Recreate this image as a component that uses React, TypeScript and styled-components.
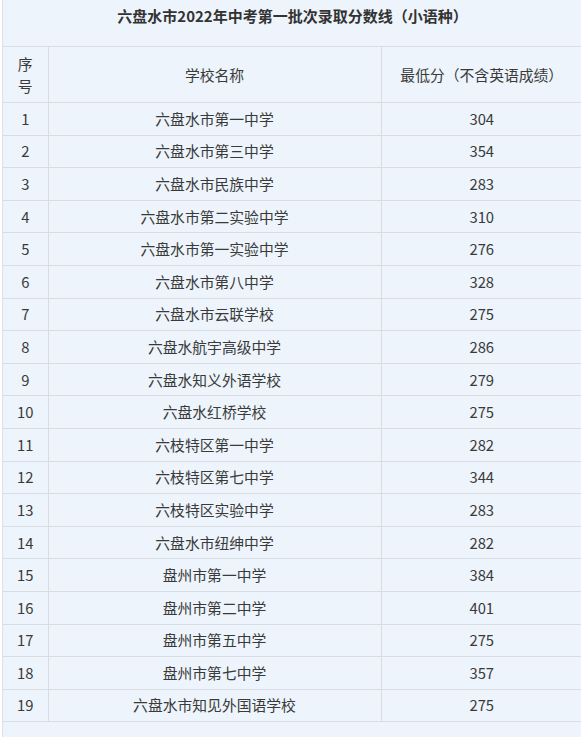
import React from "react";
import styled, { createGlobalStyle } from "styled-components";

type Row = {
  school: string;
  score: number;
};

const rows: Row[] = [
  { school: "六盘水市第一中学", score: 304 },
  { school: "六盘水市第三中学", score: 354 },
  { school: "六盘水市民族中学", score: 283 },
  { school: "六盘水市第二实验中学", score: 310 },
  { school: "六盘水市第一实验中学", score: 276 },
  { school: "六盘水市第八中学", score: 328 },
  { school: "六盘水市云联学校", score: 275 },
  { school: "六盘水航宇高级中学", score: 286 },
  { school: "六盘水知义外语学校", score: 279 },
  { school: "六盘水红桥学校", score: 275 },
  { school: "六枝特区第一中学", score: 282 },
  { school: "六枝特区第七中学", score: 344 },
  { school: "六枝特区实验中学", score: 283 },
  { school: "六盘水市纽绅中学", score: 282 },
  { school: "盘州市第一中学", score: 384 },
  { school: "盘州市第二中学", score: 401 },
  { school: "盘州市第五中学", score: 275 },
  { school: "盘州市第七中学", score: 357 },
  { school: "六盘水市知见外国语学校", score: 275 },
];

const App: React.FC = () => {
  return (
    <>
      <GlobalStyle />
      <Sheet>
        <Title>六盘水市2022年中考第一批次录取分数线（小语种）</Title>
        <Table>
          <colgroup>
            <col style={{ width: 45 }} />
            <col style={{ width: 333 }} />
            <col />
          </colgroup>
          <thead>
            <HeadRow>
              <HeadCell>
                序<br />号
              </HeadCell>
              <HeadCell>学校名称</HeadCell>
              <HeadCell>最低分（不含英语成绩）</HeadCell>
            </HeadRow>
          </thead>
          <tbody>
            {rows.map((row, i) => (
              <BodyRow key={i}>
                <Cell>{i + 1}</Cell>
                <Cell>{row.school}</Cell>
                <Cell>{row.score}</Cell>
              </BodyRow>
            ))}
          </tbody>
        </Table>
      </Sheet>
    </>
  );
};

export default App;

const GlobalStyle = createGlobalStyle`
  html, body {
    margin: 0;
    padding: 0;
    background: #ffffff;
  }
  body {
    font-family: "Noto Sans CJK SC", "Noto Sans", sans-serif;
    color: #333;
  }
`;

const Sheet = styled.div`
  margin-left: 2px;
  width: 579px;
  background: #edf4fb;
  border-left: 1px solid #dde3ea;
  padding-bottom: 15px;
`;

const Title = styled.div`
  height: 46px;
  padding-top: 5px;
  box-sizing: border-box;
  text-align: center;
  font-size: 15px;
  font-weight: bold;
  line-height: 22px;
  color: #333;
`;

const Table = styled.table`
  width: 100%;
  border-collapse: collapse;
  table-layout: fixed;
  font-size: 14.8px;
  color: #3a3a3a;
`;

const HeadRow = styled.tr`
  height: 56px;
`;

const BodyRow = styled.tr`
  height: 32.6px;
`;

const HeadCell = styled.th`
  font-weight: normal;
  text-align: center;
  line-height: 22px;
  padding: 0;
  border-top: 1.5px solid #d9dde2;
  border-bottom: 1.5px solid #d9dde2;
  border-left: 1.5px solid #d9dde2;
  &:first-child {
    border-left: none;
  }
`;

const Cell = styled.td`
  text-align: center;
  line-height: 20px;
  padding: 0;
  border-bottom: 1.5px solid #d9dde2;
  border-left: 1.5px solid #d9dde2;
  &:first-child {
    border-left: none;
  }
`;
